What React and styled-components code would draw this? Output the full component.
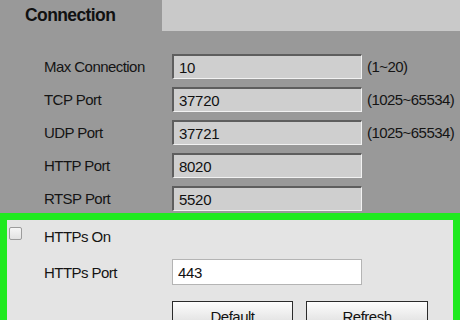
import styled, { createGlobalStyle } from "styled-components";

const GlobalStyle = createGlobalStyle`
  html, body {
    margin: 0;
    padding: 0;
    background: #999999;
  }
  body {
    font-family: "Liberation Sans", Arial, sans-serif;
  }
`;

const Page = styled.div`
  width: 460px;
  height: 320px;
  overflow: hidden;
  background-color: #999999;
  color: #141414;
`;

const TabBar = styled.div`
  display: flex;
  height: 31px;
`;

const Tab = styled.div`
  width: 162px;
  padding-left: 25px;
  box-sizing: border-box;
  background-color: #999999;
  font-weight: 700;
  font-size: 17.5px;
  letter-spacing: -0.6px;
  line-height: 31px;
  color: #111;
`;

const TabFiller = styled.div`
  flex: 1;
  background-color: #c9c9c9;
`;

const Form = styled.div`
  display: flex;
  flex-direction: column;
  gap: 8px;
  padding: 23px 0 2px 44px;
`;

const Row = styled.div`
  display: flex;
  align-items: center;
  height: 25px;
`;

const Label = styled.div`
  width: 128px;
  font-size: 15px;
  letter-spacing: -0.55px;
`;

const Field = styled.input`
  width: 190px;
  height: ${(p) => (p.$light ? 26 : 25)}px;
  box-sizing: border-box;
  margin: 0;
  padding: 1px 0 0 5px;
  font-family: inherit;
  font-size: 15px;
  letter-spacing: -0.3px;
  color: #111;
  outline: none;
  background-color: ${(p) => (p.$light ? "#ffffff" : "#cfcfcf")};
  border-style: solid;
  border-width: ${(p) => (p.$light ? "1px" : "2px 1px 1px 2px")};
  border-color: ${(p) =>
    p.$light ? "#b4b4b4" : "#5e5e5e #f2f2f2 #f2f2f2 #5e5e5e"};
`;

const Range = styled.span`
  margin-left: 5px;
  font-size: 15px;
  letter-spacing: -0.55px;
`;

const Panel = styled.div`
  border: 7px solid #1fea1f;
  border-bottom: none;
  background-color: #e4e4e4;
  height: 107px;
  padding: 7px 0 0 2px;
  display: flex;
  flex-direction: column;
`;

const CheckRow = styled.div`
  display: flex;
  align-items: flex-start;
  height: 20px;
`;

const Check = styled.input`
  appearance: none;
  width: 13px;
  height: 13px;
  margin: 0;
  border: 1px solid #9c9c9c;
  border-radius: 2px;
  background: linear-gradient(#f6f6f6, #e2e2e2);
`;

const CheckLabel = styled.div`
  margin-left: 22px;
  font-size: 15px;
  line-height: 20px;
  letter-spacing: -0.55px;
`;

const PortRow = styled(Row)`
  height: 26px;
  margin-top: 12px;
  padding-left: 35px;
`;

const Buttons = styled.div`
  display: flex;
  gap: 13px;
  margin-top: 16px;
  padding-left: 163px;
`;

const Button = styled.button`
  width: ${(p) => p.$w}px;
  height: 27px;
  margin: 0;
  border: 1px solid #2a2a2a;
  background: linear-gradient(#fdfdfd, #dcdcdc);
  font-family: inherit;
  font-size: 15px;
  letter-spacing: -0.5px;
  color: #111;
  padding: 3px 0 0;
`;

const fields = [
  { label: "Max Connection", value: "10", range: "(1~20)" },
  { label: "TCP Port", value: "37720", range: "(1025~65534)" },
  { label: "UDP Port", value: "37721", range: "(1025~65534)" },
  { label: "HTTP Port", value: "8020" },
  { label: "RTSP Port", value: "5520" },
];

export default function App() {
  return (
    <Page>
      <GlobalStyle />
      <TabBar>
        <Tab>Connection</Tab>
        <TabFiller />
      </TabBar>
      <Form>
        {fields.map((f) => (
          <Row key={f.label}>
            <Label>{f.label}</Label>
            <Field value={f.value} readOnly />
            {f.range && <Range>{f.range}</Range>}
          </Row>
        ))}
      </Form>
      <Panel>
        <CheckRow>
          <Check type="checkbox" />
          <CheckLabel>HTTPs On</CheckLabel>
        </CheckRow>
        <PortRow>
          <Label>HTTPs Port</Label>
          <Field $light value="443" readOnly />
        </PortRow>
        <Buttons>
          <Button $w={121}>Default</Button>
          <Button $w={122}>Refresh</Button>
        </Buttons>
      </Panel>
    </Page>
  );
}
